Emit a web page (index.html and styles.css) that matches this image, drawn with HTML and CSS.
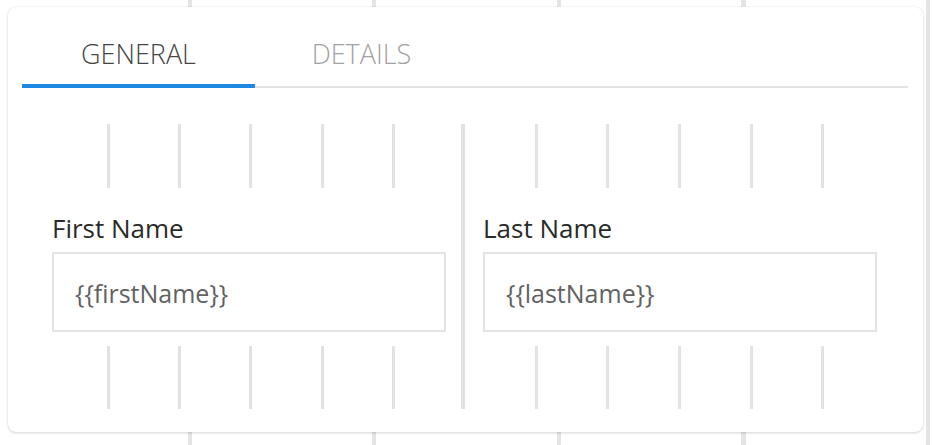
FILE: index.html
```html
<!DOCTYPE html>
<html lang="en">
<head>
<meta charset="utf-8">
<title>Form designer</title>
<link rel="stylesheet" href="styles.css">
</head>
<body>
<div class="card">
  <div class="tabs">
    <div class="tab tab-active">GENERAL</div>
    <div class="tab tab-details">DETAILS</div>
  </div>
  <div class="row">
    <div class="half half-left">
      <div class="guides guides-top"><span></span><span></span><span></span><span></span><span></span><span></span></div>
      <div class="field">
        <label class="label">First Name</label>
        <div class="input">{{firstName}}</div>
      </div>
      <div class="guides guides-bottom"><span></span><span></span><span></span><span></span><span></span><span></span></div>
    </div>
    <div class="half half-right">
      <div class="guides guides-top"><span></span><span></span><span></span><span></span><span></span><span></span></div>
      <div class="field">
        <label class="label">Last Name</label>
        <div class="input">{{lastName}}</div>
      </div>
      <div class="guides guides-bottom"><span></span><span></span><span></span><span></span><span></span><span></span></div>
    </div>
  </div>
</div>
</body>
</html>
```
FILE: styles.css
```css
html, body {
  margin: 0;
}

body {
  min-height: 445px;
  box-sizing: border-box;
  padding-top: 7px;
  overflow: hidden;
  background:
    linear-gradient(90deg, #fff 0 9px, transparent 9px),
    repeating-linear-gradient(90deg, transparent 0 3.5px, #e4e4e4 3.5px 7.5px, transparent 7.5px 184.5px),
    #fff;
  font-family: "Open Sans", "Noto Sans", sans-serif;
}

.card {
  margin: 0 9px 0 8px;
  padding: 0 15px 23px 14px;
  background: #fff;
  border-radius: 8px;
  box-shadow: 0 1px 3px rgba(0, 0, 0, 0.16), 0 0 1px rgba(0, 0, 0, 0.12);
}

.tabs {
  display: flex;
  border-bottom: 2px solid #e3e3e3;
}

.tab {
  padding: 29px 0 12px;
  margin-bottom: -2px;
  line-height: 36px;
  font-size: 27px;
  font-weight: 300;
  text-align: center;
  color: #a2a2a2;
  border-bottom: 4px solid transparent;
}

.tab-active {
  width: 233px;
  color: #454545;
  border-bottom-color: #1e88e5;
}

.tab-details {
  width: 213px;
}

.row {
  display: grid;
  grid-template-columns: 1fr 1fr;
  margin: 36px 15px 0 14px;
}

.half-right {
  box-shadow: -2px 0 0 #e2e2e2, inset 2px 0 0 #e2e2e2;
}

.guides {
  display: grid;
  grid-template-columns: repeat(6, 1fr);
}

.guides-top {
  height: 64px;
}

.guides-bottom {
  height: 63px;
}

.guides span + span {
  border-left: 3px solid #e2e2e2;
}

.field {
  padding: 24px 16px 14px;
}

.half-right .field {
  padding-left: 20px;
}

.label {
  display: block;
  margin-bottom: 8px;
  font-size: 26px;
  line-height: 32px;
  color: #2a2a2a;
}

.input {
  box-sizing: border-box;
  width: 394px;
  height: 80px;
  padding: 2px 0 0 21px;
  display: flex;
  align-items: center;
  border: 2px solid #e3e3e3;
  font-size: 25px;
  color: #626262;
}
```
